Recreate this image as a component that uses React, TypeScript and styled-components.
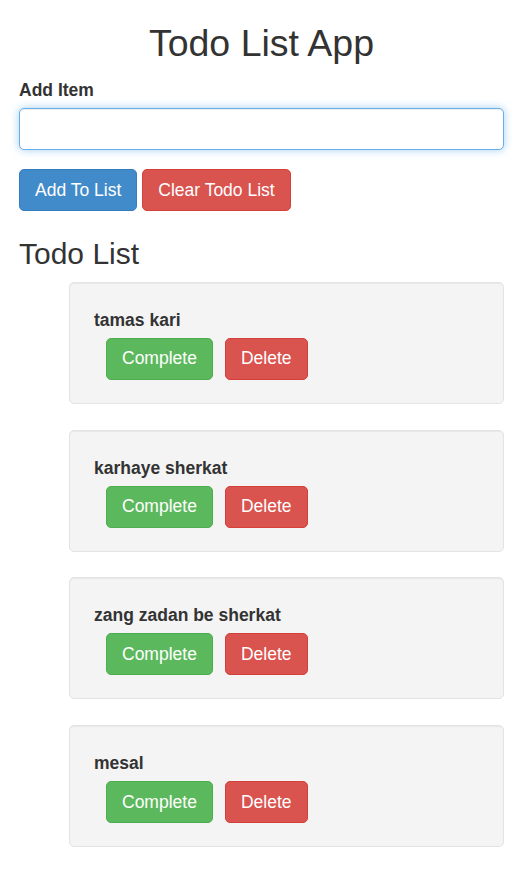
import React, { useState } from 'react';
import styled, { createGlobalStyle } from 'styled-components';

const GlobalStyle = createGlobalStyle`
  html, body {
    margin: 0;
    padding: 0;
    background: #fff;
  }
  body {
    font-family: 'Liberation Sans', Arial, Helvetica, sans-serif;
    color: #333;
    font-size: 17.5px;
  }
  * {
    box-sizing: border-box;
  }
`;

const Container = styled.div`
  padding: 23px 17px 20px 19px;
`;

const Title = styled.h1`
  margin: 0;
  font-size: 37.5px;
  line-height: 41px;
  font-weight: 400;
  text-align: center;
`;

const Label = styled.label`
  display: block;
  margin-top: 15.5px;
  font-size: 17.5px;
  line-height: 20px;
  font-weight: 700;
`;

const TextInput = styled.input`
  display: block;
  width: 100%;
  height: 42px;
  margin-top: 8.5px;
  padding: 7px 15px;
  font-family: inherit;
  font-size: 17.5px;
  color: #555;
  background: #fff;
  border: 1px solid #66afe9;
  border-radius: 5px;
  outline: none;
  box-shadow: inset 0 1px 1px rgba(0, 0, 0, 0.075), 0 0 8px rgba(102, 175, 233, 0.6);
`;

const Toolbar = styled.div`
  display: flex;
  gap: 5px;
  margin-top: 19px;
`;

const tones = {
  primary: { bg: '#428bca', border: '#357ebd' },
  danger: { bg: '#d9534f', border: '#d43f3a' },
  success: { bg: '#5cb85c', border: '#4cae4c' },
};

const Button = styled.button<{ $tone: keyof typeof tones }>`
  height: 42px;
  padding: 0 15px;
  font-family: inherit;
  font-size: 17.5px;
  color: #fff;
  background: ${({ $tone }) => tones[$tone].bg};
  border: 1px solid ${({ $tone }) => tones[$tone].border};
  border-radius: 5px;
  cursor: pointer;
  white-space: nowrap;
`;

const Subtitle = styled.h2`
  margin: 25.6px 0 0;
  font-size: 30px;
  line-height: 33px;
  font-weight: 400;
`;

const List = styled.div`
  display: flex;
  flex-direction: column;
  gap: 25.7px;
  margin: 12.4px 0 0 50px;
`;

const Well = styled.div`
  height: 122px;
  padding: 27px 24px 23px;
  background: #f4f4f4;
  border: 1px solid #e3e3e3;
  border-radius: 5px;
  box-shadow: inset 0 1px 1px rgba(0, 0, 0, 0.05);
`;

const ItemName = styled.div`
  font-size: 17.5px;
  line-height: 20px;
  font-weight: 700;
`;

const ItemActions = styled.div`
  display: flex;
  gap: 12px;
  margin: 8px 0 0 12px;
`;

export default function App() {
  const [text, setText] = useState('');
  const [items, setItems] = useState<string[]>([
    'tamas kari',
    'karhaye sherkat',
    'zang zadan be sherkat',
    'mesal',
  ]);

  const add = () => {
    if (!text.trim()) return;
    setItems([...items, text.trim()]);
    setText('');
  };

  const remove = (i: number) => setItems(items.filter((_, idx) => idx !== i));

  return (
    <>
      <GlobalStyle />
      <Container>
        <Title>Todo List App</Title>
        <Label htmlFor="item">Add Item</Label>
        <TextInput id="item" value={text} onChange={e => setText(e.target.value)} />
        <Toolbar>
          <Button $tone="primary" onClick={add}>Add To List</Button>
          <Button $tone="danger" onClick={() => setItems([])}>Clear Todo List</Button>
        </Toolbar>
        <Subtitle>Todo List</Subtitle>
        <List>
          {items.map((item, i) => (
            <Well key={i}>
              <ItemName>{item}</ItemName>
              <ItemActions>
                <Button $tone="success" onClick={() => remove(i)}>Complete</Button>
                <Button $tone="danger" onClick={() => remove(i)}>Delete</Button>
              </ItemActions>
            </Well>
          ))}
        </List>
      </Container>
    </>
  );
}
